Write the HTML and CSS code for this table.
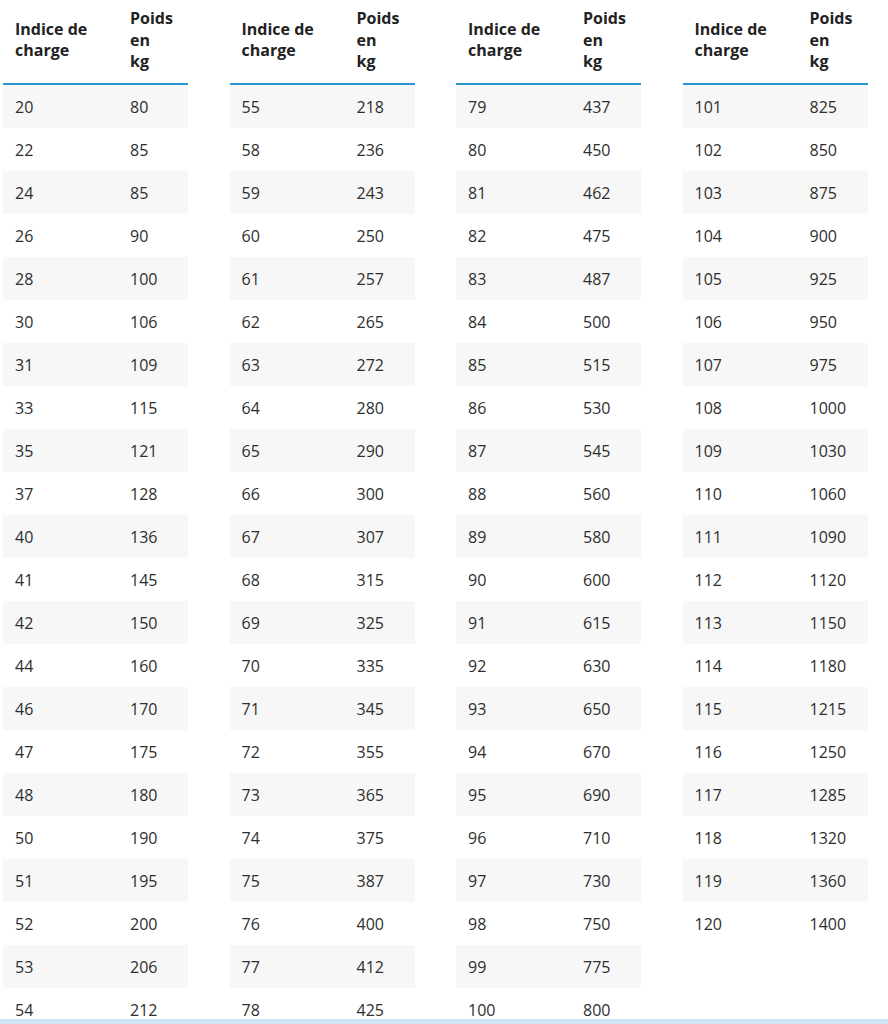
FILE: index.html
```html
<!DOCTYPE html>
<html lang="fr">
<head>
<meta charset="utf-8">
<link rel="stylesheet" href="styles.css">
</head>
<body>
<div class="tables" id="tables"></div>
<div class="band"></div>
<script>
const cols = [
  [[20,80],[22,85],[24,85],[26,90],[28,100],[30,106],[31,109],[33,115],[35,121],[37,128],[40,136],[41,145],[42,150],[44,160],[46,170],[47,175],[48,180],[50,190],[51,195],[52,200],[53,206],[54,212]],
  [[55,218],[58,236],[59,243],[60,250],[61,257],[62,265],[63,272],[64,280],[65,290],[66,300],[67,307],[68,315],[69,325],[70,335],[71,345],[72,355],[73,365],[74,375],[75,387],[76,400],[77,412],[78,425]],
  [[79,437],[80,450],[81,462],[82,475],[83,487],[84,500],[85,515],[86,530],[87,545],[88,560],[89,580],[90,600],[91,615],[92,630],[93,650],[94,670],[95,690],[96,710],[97,730],[98,750],[99,775],[100,800]],
  [[101,825],[102,850],[103,875],[104,900],[105,925],[106,950],[107,975],[108,1000],[109,1030],[110,1060],[111,1090],[112,1120],[113,1150],[114,1180],[115,1215],[116,1250],[117,1285],[118,1320],[119,1360],[120,1400]]
];
const wrap = document.getElementById('tables');
cols.forEach(rows => {
  let h = '<table class="load"><colgroup><col class="k1"><col class="k2"></colgroup><thead><tr><th>Indice de<br>charge</th><th>Poids<br>en<br>kg</th></tr></thead><tbody>';
  rows.forEach(r => { h += '<tr><td>' + r[0] + '</td><td>' + r[1] + '</td></tr>'; });
  h += '</tbody></table>';
  wrap.insertAdjacentHTML('beforeend', h);
});
</script>
</body>
</html>
```
FILE: styles.css
```css
html, body {
  margin: 0;
  padding: 0;
  background: #fff;
}
body {
  font-family: "Open Sans", "Liberation Sans", sans-serif;
  color: #333;
  overflow: hidden;
  height: 1024px;
}
.tables {
  display: flex;
  align-items: flex-start;
  gap: 41.5px;
  padding-left: 3px;
}
.load {
  border-collapse: collapse;
  width: 185px;
  table-layout: fixed;
}
.load col.k1 { width: 115px; }
.load col.k2 { width: 70px; }
.load th {
  font-weight: 700;
  font-size: 16px;
  line-height: 21.5px;
  color: #222;
  text-align: left;
  vertical-align: middle;
  padding: 8px 0 10px 12px;
  border-bottom: 2px solid #2a93d5;
}
.load td {
  font-size: 16px;
  line-height: 22px;
  padding: 11px 0 10px 12px;
  vertical-align: middle;
  color: #2e2e2e;
}
.load tbody tr:nth-child(odd) td {
  background: #f7f7f7;
}
.band {
  position: fixed;
  left: 0;
  right: 0;
  bottom: 0;
  height: 5px;
  background: #cfe5f4;
}
```
